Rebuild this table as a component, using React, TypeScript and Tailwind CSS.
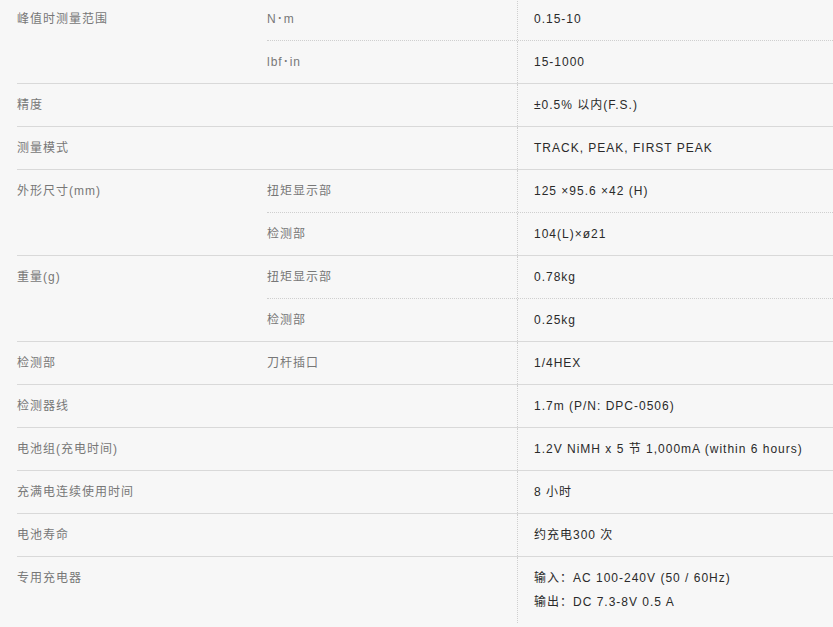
const font = { fontFamily: '"Liberation Sans", Arial, "Noto Sans CJK SC", sans-serif' };

type Sub = { unit?: string; value: string[] };
type Row = { label: string; subs: Sub[] };

const ROWS: Row[] = [
  { label: "峰值时测量范围", subs: [{ unit: "N･m", value: ["0.15-10"] }, { unit: "lbf･in", value: ["15-1000"] }] },
  { label: "精度", subs: [{ value: ["±0.5% 以内(F.S.)"] }] },
  { label: "测量模式", subs: [{ value: ["TRACK, PEAK, FIRST PEAK"] }] },
  { label: "外形尺寸(mm)", subs: [{ unit: "扭矩显示部", value: ["125 ×95.6 ×42 (H)"] }, { unit: "检测部", value: ["104(L)×ø21"] }] },
  { label: "重量(g)", subs: [{ unit: "扭矩显示部", value: ["0.78kg"] }, { unit: "检测部", value: ["0.25kg"] }] },
  { label: "检测部", subs: [{ unit: "刀杆插口", value: ["1/4HEX"] }] },
  { label: "检测器线", subs: [{ value: ["1.7m (P/N: DPC-0506)"] }] },
  { label: "电池组(充电时间)", subs: [{ value: ["1.2V NiMH x 5 节 1,000mA (within 6 hours)"] }] },
  { label: "充满电连续使用时间", subs: [{ value: ["8 小时"] }] },
  { label: "电池寿命", subs: [{ value: ["约充电300 次"] }] },
  { label: "专用充电器", subs: [{ value: ["输入：AC 100-240V (50 / 60Hz)", "输出：DC 7.3-8V 0.5 A"] }] },
];

export default function App() {
  return (
    <div className="min-h-[627px] w-[833px] overflow-hidden bg-[#f7f7f7] text-[12px] leading-[24px] tracking-[1px]" style={font}>
      <div className="-mt-[2px] ml-[17px]">
        {ROWS.map((row, i) => (
          <div key={i} className={`flex ${i < ROWS.length - 1 ? "border-b border-[#d9d9d9]" : ""}`}>
            <div className="w-[250px] shrink-0 py-[9px] text-[#777]">{row.label}</div>
            <div className="flex-1">
              {row.subs.map((s, j) => (
                <div key={j} className={`flex ${j < row.subs.length - 1 ? "border-b border-dotted border-[#cfcfcf]" : ""}`}>
                  <div className="w-[250px] shrink-0 py-[9px] text-[#777]">{s.unit ?? ""}</div>
                  <div className="flex-1 border-l border-dotted border-[#cfcfcf] py-[9px] pl-4 text-[#2a2a2a]">
                    {s.value.map((v, k) => (
                      <div key={k}>{v}</div>
                    ))}
                  </div>
                </div>
              ))}
            </div>
          </div>
        ))}
      </div>
    </div>
  );
}
